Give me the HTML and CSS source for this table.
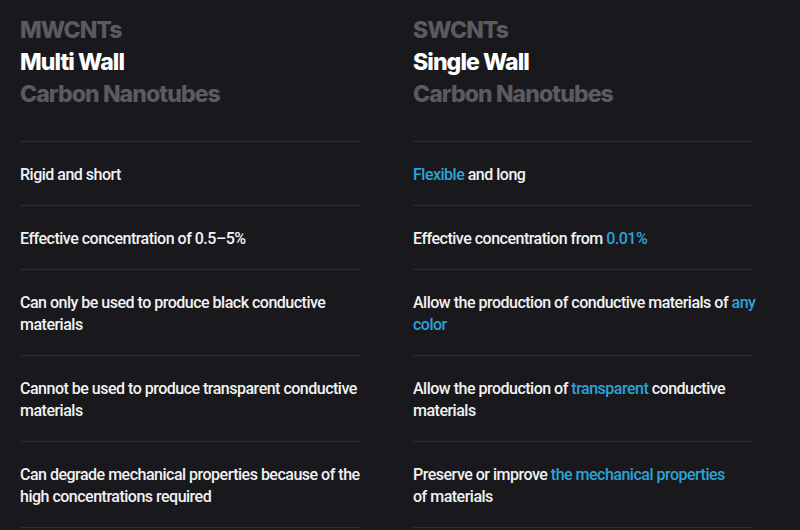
FILE: index.html
```html
<!DOCTYPE html>
<html>
<head>
<meta charset="utf-8">
<link rel="stylesheet" href="styles.css">
</head>
<body>
<main class="compare">
  <section class="col">
    <header class="head">
      <div class="dim">MWCNTs</div>
      <div class="bright">Multi Wall</div>
      <div class="dim">Carbon Nanotubes</div>
    </header>
    <ul class="list">
      <li>Rigid and short</li>
      <li>Effective concentration of 0.5–5%</li>
      <li>Can only be used to produce black conductive<br>materials</li>
      <li>Cannot be used to produce transparent conductive<br>materials</li>
      <li>Can degrade mechanical properties because of the<br>high concentrations required</li>
    </ul>
  </section>
  <section class="col">
    <header class="head">
      <div class="dim">SWCNTs</div>
      <div class="bright">Single Wall</div>
      <div class="dim">Carbon Nanotubes</div>
    </header>
    <ul class="list">
      <li><span class="hl">Flexible</span> and long</li>
      <li>Effective concentration from <span class="hl">0.01%</span></li>
      <li>Allow the production of conductive materials of <span class="hl">any</span><br><span class="hl">color</span></li>
      <li>Allow the production of <span class="hl">transparent</span> conductive<br>materials</li>
      <li>Preserve or improve <span class="hl">the mechanical properties</span><br>of materials</li>
    </ul>
  </section>
</main>
</body>
</html>
```
FILE: styles.css
```css
html, body {
  margin: 0;
  padding: 0;
  background: #19191d;
  height: 530px;
  overflow: hidden;
}
body {
  font-family: Roboto, "Liberation Sans", sans-serif;
  color: #f2f2f2;
}
.compare {
  display: grid;
  grid-template-columns: 340px 340px;
  column-gap: 53px;
  padding: 0 20px;
}
.head {
  font-family: Inter, "Liberation Sans", sans-serif;
  font-weight: 800;
  font-size: 23px;
  line-height: 32px;
  letter-spacing: -0.9px;
  padding-top: 14px;
  height: 141px;
  box-sizing: border-box;
}
.dim { color: #5a5a5f; }
.bright { color: #ffffff; }
.list {
  list-style: none;
  margin: 0;
  padding: 0;
}
.list li {
  border-top: 1px solid #2c2c31;
  padding: 22px 0 19px;
  font-size: 16px;
  font-weight: 500;
  line-height: 22px;
  letter-spacing: -0.5px;
  white-space: nowrap;
}
.list li:last-child {
  border-bottom: 1px solid #2c2c31;
}
.hl { color: #2aa4d8; }
```
